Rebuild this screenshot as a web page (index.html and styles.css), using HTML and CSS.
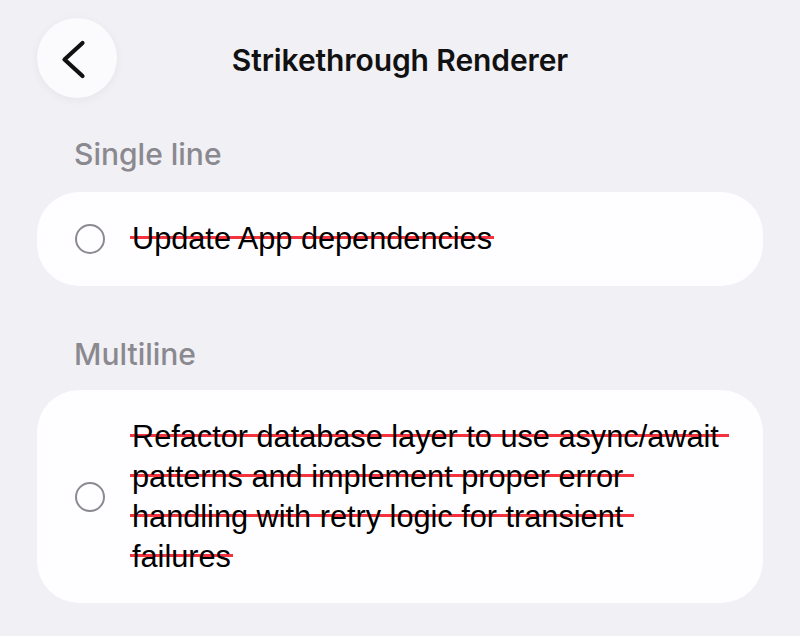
FILE: index.html
```html
<!DOCTYPE html>
<html lang="en">
<head>
<meta charset="utf-8">
<title>Strikethrough Renderer</title>
<link rel="stylesheet" href="styles.css">
</head>
<body>
<div class="screen">
  <header class="header">
    <button class="back" aria-label="Back">
      <svg width="80" height="80" viewBox="0 0 80 80"><path d="M45.5 25 L27.5 41.5 L45.5 58" fill="none" stroke="#111" stroke-width="4.2" stroke-linecap="round" stroke-linejoin="round"/></svg>
    </button>
    <h1 class="title">Strikethrough Renderer</h1>
    <div class="spacer"></div>
  </header>

  <section class="section">
    <h2 class="label">Single line</h2>
    <div class="card">
      <span class="radio"></span>
      <p class="item"><span class="strike">Update App dependencies</span></p>
    </div>
  </section>

  <section class="section section-multi">
    <h2 class="label">Multiline</h2>
    <div class="card">
      <span class="radio"></span>
      <p class="item"><span class="strike">Refactor database layer to use async/await patterns and implement proper error handling with retry logic for transient failures</span></p>
    </div>
  </section>
</div>
</body>
</html>
```

FILE: styles.css
```css
* { box-sizing: border-box; }

html, body {
  margin: 0;
  padding: 0;
  background: #f1f0f5;
}

.screen {
  width: 800px;
  height: 636px;
  padding: 18px 37px 0 37px;
  font-family: Inter, "Liberation Sans", sans-serif;
  overflow: hidden;
}

.header {
  display: flex;
  align-items: center;
  height: 80px;
}

.back {
  width: 80px;
  height: 80px;
  border: none;
  padding: 0;
  margin: 0;
  border-radius: 50%;
  background: #fbfbfd;
  box-shadow: 0 2px 10px rgba(0, 0, 0, 0.05);
  display: flex;
  flex: none;
}

.spacer {
  width: 80px;
  flex: none;
}

.title {
  flex: 1;
  margin: 0;
  padding-top: 4px;
  text-align: center;
  font-size: 30px;
  font-weight: 600;
  color: #111;
  letter-spacing: -0.1px;
}

.section {
  margin-top: 38px;
}

.section-multi {
  margin-top: 50px;
}

.label {
  margin: 0 0 20px 37px;
  font-size: 30px;
  line-height: 36px;
  font-weight: 500;
  color: #8a898f;
}

.section-multi .label {
  margin-bottom: 18px;
}

.card {
  display: flex;
  align-items: center;
  gap: 27px;
  background: #fefdff;
  border-radius: 42px;
  padding: 27px 38px 27px 38px;
}

.section-multi .card {
  padding: 27px 38px 26px 38px;
}

.radio {
  flex: none;
  width: 30px;
  height: 30px;
  border-radius: 50%;
  border: 2.5px solid #8b8a8f;
}

.item {
  margin: 0;
  flex: 1;
  font-family: "Liberation Sans", Arial, sans-serif;
  font-size: 30.7px;
  line-height: 40px;
  color: #000;
}

.strike {
  white-space: pre-wrap;
  padding: 0 2px;
  margin: 0 -2px;
  -webkit-box-decoration-break: clone;
  box-decoration-break: clone;
  background-image: linear-gradient(to bottom, transparent 14.8px, #f5333f 14.8px, #f5333f 18.2px, transparent 18.2px);
}
```
